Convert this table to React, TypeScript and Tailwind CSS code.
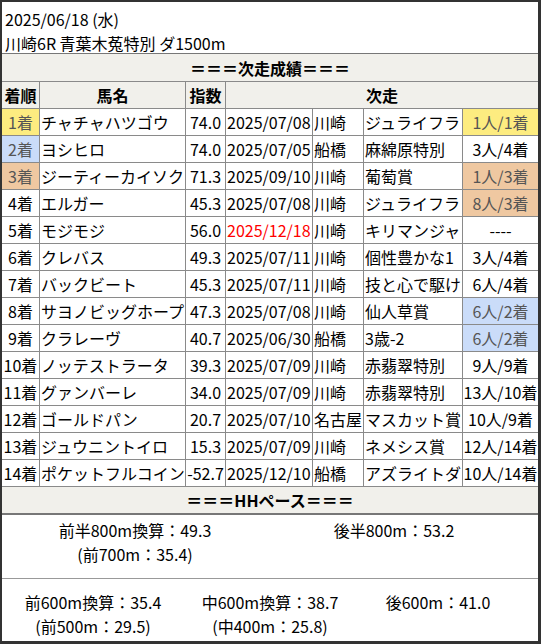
import React from "react";

type Row = {
  rank: string;
  name: string;
  idx: string;
  date: string;
  place: string;
  race: string;
  result: string;
  rankBg?: string;
  resBg?: string;
  red?: boolean;
};

const YELLOW = "bg-[#fdec80] text-[#555]";
const BLUE = "bg-[#cadcf9] text-[#555]";
const TAN = "bg-[#efc8a1] text-[#555]";

const rows: Row[] = [
  { rank: "1着", name: "チャチャハツゴウ", idx: "74.0", date: "2025/07/08", place: "川崎", race: "ジュライフラ", result: "1人/1着", rankBg: YELLOW, resBg: YELLOW },
  { rank: "2着", name: "ヨシヒロ", idx: "74.0", date: "2025/07/05", place: "船橋", race: "麻綿原特別", result: "3人/4着", rankBg: BLUE },
  { rank: "3着", name: "ジーティーカイソク", idx: "71.3", date: "2025/09/10", place: "川崎", race: "葡萄賞", result: "1人/3着", rankBg: TAN, resBg: TAN },
  { rank: "4着", name: "エルガー", idx: "45.3", date: "2025/07/08", place: "川崎", race: "ジュライフラ", result: "8人/3着", resBg: TAN },
  { rank: "5着", name: "モジモジ", idx: "56.0", date: "2025/12/18", place: "川崎", race: "キリマンジャ", result: "----", red: true },
  { rank: "6着", name: "クレバス", idx: "49.3", date: "2025/07/11", place: "川崎", race: "個性豊かな1", result: "3人/4着" },
  { rank: "7着", name: "バックビート", idx: "45.3", date: "2025/07/11", place: "川崎", race: "技と心で駆け", result: "6人/4着" },
  { rank: "8着", name: "サヨノビッグホープ", idx: "47.3", date: "2025/07/08", place: "川崎", race: "仙人草賞", result: "6人/2着", resBg: BLUE },
  { rank: "9着", name: "クラレーヴ", idx: "40.7", date: "2025/06/30", place: "船橋", race: "3歳-2", result: "6人/2着", resBg: BLUE },
  { rank: "10着", name: "ノッテストラータ", idx: "39.3", date: "2025/07/09", place: "川崎", race: "赤翡翠特別", result: "9人/9着" },
  { rank: "11着", name: "グァンバーレ", idx: "34.0", date: "2025/07/09", place: "川崎", race: "赤翡翠特別", result: "13人/10着" },
  { rank: "12着", name: "ゴールドパン", idx: "20.7", date: "2025/07/10", place: "名古屋", race: "マスカット賞", result: "10人/9着" },
  { rank: "13着", name: "ジュウニントイロ", idx: "15.3", date: "2025/07/09", place: "川崎", race: "ネメシス賞", result: "12人/14着" },
  { rank: "14着", name: "ポケットフルコイン", idx: "-52.7", date: "2025/12/10", place: "船橋", race: "アズライトダ", result: "10人/14着" },
];

const cell = "border border-[#8a8a8a] h-[27px] p-0 whitespace-nowrap overflow-hidden";

export default function App() {
  return (
    <div
      className="w-[541px] h-[644px] bg-white border-l-2 border-t-2 border-r-[3px] border-b-[3px] border-[#333] text-[16px] leading-6 text-black overflow-hidden"
      style={{ fontFamily: '"Noto Sans CJK JP", "Noto Sans", sans-serif' }}
    >
      {/* ── Title ── */}
      <div className="h-[51px] px-[3px] pt-[5px]">
        <div>2025/06/18 (水)</div>
        <div>川崎6R 青葉木菟特別 ダ1500m</div>
      </div>

      <table className="table-fixed border-collapse w-[537px] -ml-px">
        <colgroup>
          <col className="w-[38px]" />
          <col className="w-[146px]" />
          <col className="w-[40px]" />
          <col className="w-[87px]" />
          <col className="w-[51px]" />
          <col className="w-[99px]" />
          <col className="w-[76px]" />
        </colgroup>
        <thead>
          <tr>
            <th colSpan={7} className={`${cell} h-[28px] bg-[#f1f0eb] text-center font-bold border-t-[#777]`}>
              ＝＝＝次走成績＝＝＝
            </th>
          </tr>
          <tr className="bg-[#f1f0eb]">
            <th className={`${cell} font-bold text-center`}>着順</th>
            <th className={`${cell} font-bold text-center`}>馬名</th>
            <th className={`${cell} font-bold text-center`}>指数</th>
            <th colSpan={4} className={`${cell} font-bold text-center`}>次走</th>
          </tr>
        </thead>
        <tbody>
          {rows.map((r) => (
            <tr key={r.rank}>
              <td className={`${cell} text-center ${r.rankBg ?? ""}`}>{r.rank}</td>
              <td className={`${cell} pl-[1px]`}>{r.name}</td>
              <td className={`${cell} text-center`}>{r.idx}</td>
              <td className={`${cell} pl-[1px] ${r.red ? "text-[#f00]" : ""}`}>{r.date}</td>
              <td className={`${cell} pl-[1px]`}>{r.place}</td>
              <td className={`${cell} pl-[1px]`}>{r.race}</td>
              <td className={`${cell} text-center ${r.resBg ?? ""}`}>{r.result}</td>
            </tr>
          ))}
          <tr>
            <td colSpan={7} className={`${cell} h-[27px] bg-[#f1f0eb] text-center font-bold border-b-2 border-b-[#777]`}>
              ＝＝＝HHペース＝＝＝
            </td>
          </tr>
        </tbody>
      </table>

      {/* ── Pace ── */}
      <div className="h-[64px] border-b border-[#999] grid grid-cols-[266px_252px] pt-[3px]">
        <div className="flex flex-col items-center">
          <div>前半800m換算：49.3</div>
          <div>(前700m：35.4)</div>
        </div>
        <div className="flex flex-col items-center">
          <div>後半800m：53.2</div>
        </div>
      </div>
      <div className="grid grid-cols-[182px_172px_164px] pt-[11px]">
        <div className="flex flex-col items-center">
          <div>前600m換算：35.4</div>
          <div>(前500m：29.5)</div>
        </div>
        <div className="flex flex-col items-center">
          <div>中600m換算：38.7</div>
          <div>(中400m：25.8)</div>
        </div>
        <div className="flex flex-col items-center">
          <div>後600m：41.0</div>
        </div>
      </div>
    </div>
  );
}
